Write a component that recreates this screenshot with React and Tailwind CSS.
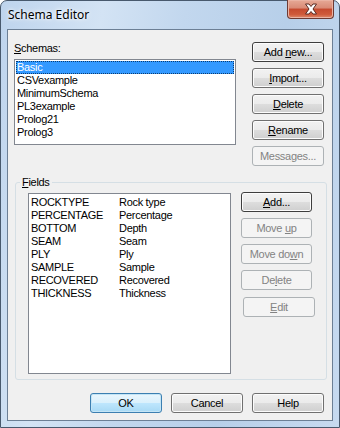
import React from "react";

const F = "font-['Tahoma','Liberation_Sans',sans-serif] text-[11px] leading-[13px] tracking-[-0.3px]";

function Btn({ children, w = "w-[72px]", kind = "normal", className = "" }) {
  const base = `${w} h-[20px] rounded-[3px] border flex items-center justify-center ${F}`;
  const inner = <span className="whitespace-pre">{children}</span>;
  if (kind === "disabled")
    return (
      <div className={`${base} border-[#adb2b5] bg-[#f4f4f4] text-[#838383] ${className}`}>{inner}</div>
    );
  if (kind === "ok")
    return (
      <div className={`${base} border-[#3c7fb1] bg-[linear-gradient(to_bottom,#eaf6fd_0%,#d9f0fc_50%,#bee6fd_51%,#a7d9f5_100%)] text-black shadow-[inset_0_0_0_1px_#c4e5f6] ${className}`}>{inner}</div>
    );
  const border = kind === "default" ? "border-[#3e3e3e]" : "border-[#707070]";
  return (
    <div className={`${base} ${border} bg-[linear-gradient(to_bottom,#f2f2f2_0%,#ebebeb_50%,#dddddd_51%,#cfcfcf_100%)] text-black shadow-[inset_0_0_0_1px_#fcfcfc] ${className}`}>{inner}</div>
  );
}

const U = ({ children }) => <span className="underline underline-offset-[1px]">{children}</span>;

const schemas = ["Basic", "CSVexample", "MinimumSchema", "PL3example", "Prolog21", "Prolog3"];
const fields = [
  ["ROCKTYPE", "Rock type"],
  ["PERCENTAGE", "Percentage"],
  ["BOTTOM", "Depth"],
  ["SEAM", "Seam"],
  ["PLY", "Ply"],
  ["SAMPLE", "Sample"],
  ["RECOVERED", "Recovered"],
  ["THICKNESS", "Thickness"],
];

export default function App() {
  return (
    <div className="w-[340px] h-[428px] bg-white">
      <div className="w-[340px] h-[428px] rounded-t-[7px] border border-[#48596d] bg-[linear-gradient(100deg,#bed4ed_0%,#d3e3f4_25%,#c2d7ee_45%,#b7cfe9_70%,#c7daf0_100%)] flex flex-col">
        <div className="h-[28px] flex justify-between items-start">
          <div className="pl-[7px] pt-[6px] font-['Noto_Sans','Open_Sans',sans-serif] text-[12px] leading-[16px] text-black [text-shadow:0_0_6px_#ffffff,0_0_3px_#ffffff]">
            Schema Editor
          </div>
          <div className="mr-[5px] mt-[-1px] w-[47px] h-[19px] rounded-b-[4px] border border-t-0 border-[#6d3a33] bg-[linear-gradient(to_bottom,#e6a996_0%,#d98a75_45%,#c54a2f_50%,#cf5a3b_80%,#de8a6c_100%)] flex items-center justify-center shadow-[inset_0_0_0_1px_#eab3a3]">
            <svg width="14" height="12" viewBox="0 0 14 12">
              <path d="M1.5 1 L5 1 L7 3.5 L9 1 L12.5 1 L9 6 L12.5 11 L9 11 L7 8.5 L5 11 L1.5 11 L5 6 Z" fill="#ffffff" stroke="#5a2a22" strokeWidth="1" strokeLinejoin="round" />
            </svg>
          </div>
        </div>
        <div className="ml-[6px] w-[326px] h-[392px] border border-[#6c7f95] bg-[#f0f0f0] flex flex-col">
          <div className="flex items-start">
            <div className="ml-[6px] pt-[12px] w-[222px] flex flex-col">
              <div className={`${F} text-black`}><U>S</U>chemas:</div>
              <div className="mt-[4px] h-[86px] border border-[#828790] bg-white pt-[1px] px-[1px]">
                {schemas.map((s, i) => (
                  <div
                    key={s}
                    className={`h-[13px] pl-[1px] ${F} ${i === 0 ? "bg-[#3399ff] text-white outline-1 outline-dotted outline-[#0b3c70] -outline-offset-1" : "text-black"}`}
                  >
                    {s}
                  </div>
                ))}
              </div>
            </div>
            <div className="ml-[16px] pt-[12px] flex flex-col gap-[6px]">
              <Btn kind="default">Add <U>n</U>ew...</Btn>
              <Btn><U>I</U>mport...</Btn>
              <Btn><U>D</U>elete</Btn>
              <Btn><U>R</U>ename</Btn>
              <Btn kind="disabled">Messa<U>g</U>es...</Btn>
            </div>
          </div>
          <fieldset className="ml-[7px] mt-[10px] w-[310px] h-[204px] border border-[#d5dfe5] rounded-[3px] pl-[12px] pr-[11px] pb-[5px] flex">
            <legend className={`ml-[-8px] px-[2px] ${F} text-black`}><U>F</U>ields</legend>
            <div className="flex items-start w-full">
              <div className="mt-[4px] w-[203px] h-[181px] border border-[#828790] bg-white pt-[2px] pl-[2px]">
                {fields.map(([a, b]) => (
                  <div key={a} className={`h-[13px] flex ${F} text-black`}>
                    <span className="w-[88px] shrink-0">{a}</span>
                    <span>{b}</span>
                  </div>
                ))}
              </div>
              <div className="ml-[10px] mt-[3px] flex flex-col gap-[6px]">
                <Btn w="w-[71px]" kind="default"><U>A</U>dd...</Btn>
                <Btn w="w-[71px]" kind="disabled">Move <U>u</U>p</Btn>
                <Btn w="w-[71px]" kind="disabled">Move do<U>w</U>n</Btn>
                <Btn w="w-[71px]" kind="disabled">De<U>l</U>ete</Btn>
                <Btn kind="disabled" className="ml-[2px] mt-[1px]"><U>E</U>dit</Btn>
              </div>
            </div>
          </fieldset>
          <div className="mt-[13px] pr-[8px] flex justify-end gap-[9px]">
            <Btn kind="ok">OK</Btn>
            <Btn>Cancel</Btn>
            <Btn>Help</Btn>
          </div>
        </div>
      </div>
    </div>
  );
}
